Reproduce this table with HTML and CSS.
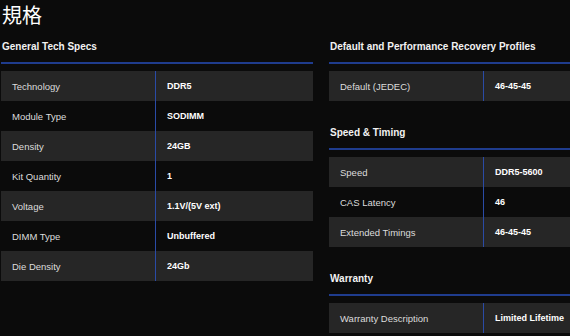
FILE: index.html
```html
<!DOCTYPE html>
<html lang="ja">
<head>
<meta charset="utf-8">
<link rel="stylesheet" href="styles.css">
</head>
<body>
<div class="page">
  <h1 class="title">規格</h1>
  <div class="cols">
    <div class="col">
      <section class="sec">
        <h3 class="sec-h">General Tech Specs</h3>
        <div class="tbl">
          <div class="row"><div class="k">Technology</div><div class="v">DDR5</div></div>
          <div class="row"><div class="k">Module Type</div><div class="v">SODIMM</div></div>
          <div class="row"><div class="k">Density</div><div class="v">24GB</div></div>
          <div class="row"><div class="k">Kit Quantity</div><div class="v">1</div></div>
          <div class="row"><div class="k">Voltage</div><div class="v">1.1V/(5V ext)</div></div>
          <div class="row"><div class="k">DIMM Type</div><div class="v">Unbuffered</div></div>
          <div class="row"><div class="k">Die Density</div><div class="v">24Gb</div></div>
        </div>
      </section>
    </div>
    <div class="col">
      <section class="sec">
        <h3 class="sec-h">Default and Performance Recovery Profiles</h3>
        <div class="tbl">
          <div class="row"><div class="k">Default (JEDEC)</div><div class="v">46-45-45</div></div>
        </div>
      </section>
      <section class="sec">
        <h3 class="sec-h">Speed &amp; Timing</h3>
        <div class="tbl">
          <div class="row"><div class="k">Speed</div><div class="v">DDR5-5600</div></div>
          <div class="row"><div class="k">CAS Latency</div><div class="v">46</div></div>
          <div class="row"><div class="k">Extended Timings</div><div class="v">46-45-45</div></div>
        </div>
      </section>
      <section class="sec">
        <h3 class="sec-h">Warranty</h3>
        <div class="tbl">
          <div class="row"><div class="k">Warranty Description</div><div class="v">Limited Lifetime</div></div>
        </div>
      </section>
    </div>
  </div>
</div>
</body>
</html>
```
FILE: styles.css
```css
html, body {
  margin: 0;
  padding: 0;
  background: #0b0b0b;
  overflow: hidden;
}
.page {
  width: 641px;
  padding-left: 1px;
  font-family: "Liberation Sans", Arial, sans-serif;
  color: #e6e6e6;
}
.title {
  margin: 0;
  padding: 0 0 0 1px;
  font-family: "Noto Sans CJK JP", "Noto Sans", sans-serif;
  font-weight: 400;
  font-size: 20px;
  line-height: 29px;
  color: #ffffff;
}
.cols {
  display: grid;
  grid-template-columns: 312px 312px;
  column-gap: 16px;
  margin-top: 10.5px;
}
.sec + .sec {
  margin-top: 24.5px;
}
.sec-h {
  margin: 0;
  padding: 0 0 8px 1px;
  font-size: 10px;
  line-height: 14px;
  font-weight: 700;
  color: #f2f2f2;
  border-bottom: 2px solid #1f3c8e;
}
.tbl {
  margin-top: 7.5px;
}
.row {
  display: grid;
  grid-template-columns: 155px 1fr;
  height: 30px;
  align-items: stretch;
}
.row:nth-child(odd) {
  background: #262626;
}
.k, .v {
  display: flex;
  align-items: center;
  padding-left: 11px;
  white-space: nowrap;
}
.k {
  font-size: 9.5px;
  color: #dcdcdc;
  border-right: 1.5px solid #2a4ba6;
}
.v {
  font-size: 9px;
  font-weight: 700;
  color: #ffffff;
}
```
